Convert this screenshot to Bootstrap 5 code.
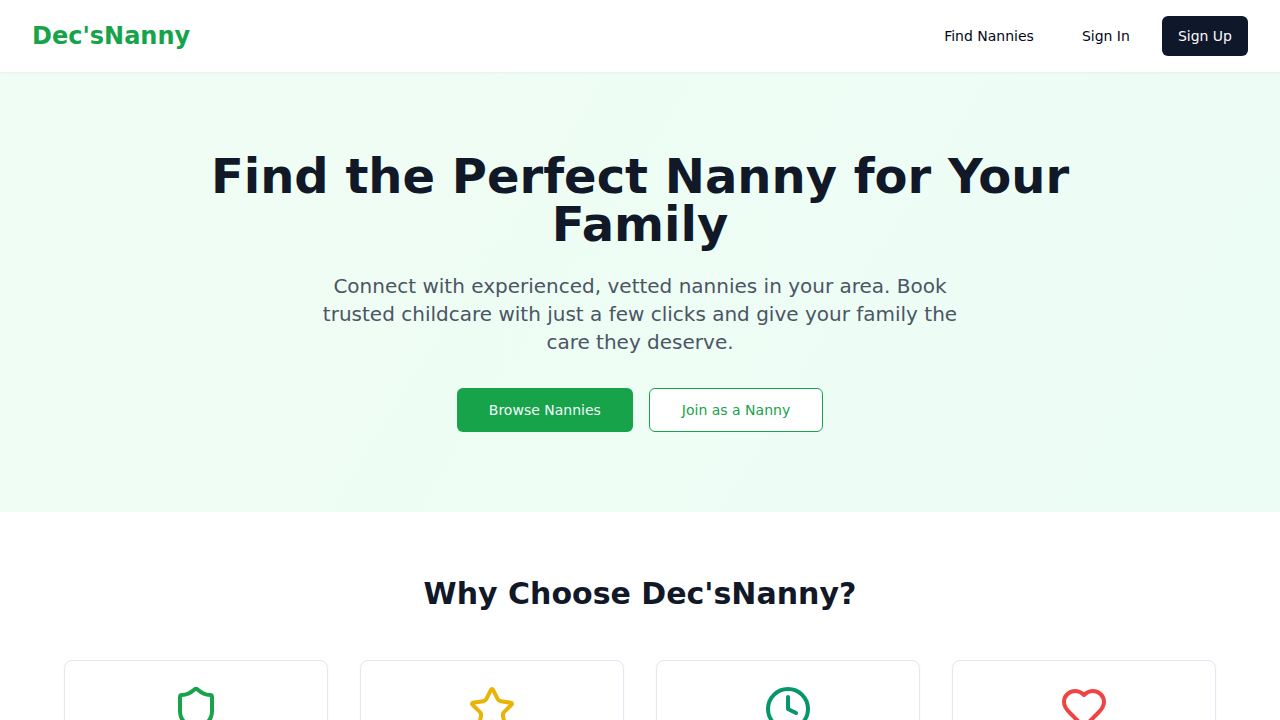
<!DOCTYPE html>
<html lang="en">
<head>
<meta charset="utf-8">
<meta name="viewport" content="width=device-width, initial-scale=1">
<title>Dec'sNanny</title>
<link href="https://cdn.jsdelivr.net/npm/bootstrap@5.3.0/dist/css/bootstrap.min.css" rel="stylesheet">
<style>
  body { font-family: "DejaVu Sans", sans-serif; color: #020817; font-size: 16px; line-height: 24px; overflow-x: hidden; }
  html { scrollbar-width: none; }
  .site-nav { box-shadow: 0 1px 2px rgba(0,0,0,.05); position: relative; z-index: 1; padding: 16px 32px; }
  .brand-name { font-size: 24px; line-height: 32px; font-weight: 700; color: #16a34a; }
  .btn { --bs-btn-font-size: 14px; --bs-btn-line-height: 20px; --bs-btn-border-radius: 6px; --bs-btn-padding-x: 16px; --bs-btn-padding-y: 10px; border-width: 0; }
  .btn-plain { --bs-btn-color: #020817; --bs-btn-hover-bg: #f1f5f9; }
  .btn-dark-navy { --bs-btn-color: #f8fafc; --bs-btn-bg: #0f172a; --bs-btn-hover-color: #f8fafc; --bs-btn-hover-bg: #272e3f; }
  .btn-cta { --bs-btn-padding-x: 32px; --bs-btn-padding-y: 12px; }
  .btn-leaf { --bs-btn-color: #f8fafc; --bs-btn-bg: #16a34a; --bs-btn-hover-color: #f8fafc; --bs-btn-hover-bg: #15803d; }
  .btn-outline-leaf { --bs-btn-padding-y: 11px; --bs-btn-color: #16a34a; --bs-btn-bg: #fff; --bs-btn-border-color: #16a34a; --bs-btn-hover-color: #16a34a; --bs-btn-hover-bg: #f0fdf4; --bs-btn-hover-border-color: #16a34a; border-width: 1px; }
  .hero { background: linear-gradient(122deg, #f0fdf4, #ecfdf5); padding: 80px 32px; }
  .hero-inner { max-width: 896px; }
  .hero h1 { font-size: 48px; line-height: 48px; font-weight: 700; color: #111827; margin-bottom: 24px; }
  .hero p { font-size: 20px; line-height: 28px; color: #4b5563; max-width: 672px; margin-bottom: 32px; }
  .features { padding: 64px 64px; }
  .features h2 { font-size: 30px; line-height: 36px; font-weight: 700; color: #111827; margin-bottom: 48px; }
  .features .card { border-color: #e2e8f0; border-radius: 8px; box-shadow: 0 1px 2px rgba(0,0,0,.05); padding: 24px; }
  .features .row { --bs-gutter-x: 32px; --bs-gutter-y: 32px; }
  .features svg { width: 48px; height: 48px; fill: none; stroke: currentColor; stroke-width: 2; stroke-linecap: round; stroke-linejoin: round; }
  .tone-green { color: #16a34a; } .tone-yellow { color: #eab308; } .tone-emerald { color: #059669; } .tone-red { color: #ef4444; }
</style>
</head>
<body>
<nav class="site-nav bg-white d-flex flex-wrap justify-content-between align-items-center" aria-label="Main">
  <a href="#" class="brand-name text-decoration-none">Dec'sNanny</a>
  <div class="d-flex gap-3">
    <a href="#" class="btn btn-plain">Find Nannies</a>
    <a href="#" class="btn btn-plain">Sign In</a>
    <a href="#" class="btn btn-dark-navy">Sign Up</a>
  </div>
</nav>
<main>
  <section class="hero text-center">
    <div class="hero-inner mx-auto">
      <h1>Find the Perfect Nanny for Your Family</h1>
      <p class="mx-auto">Connect with experienced, vetted nannies in your area. Book trusted childcare with just a few clicks and give your family the care they deserve.</p>
      <div class="d-flex flex-wrap justify-content-center gap-3">
        <button type="button" class="btn btn-cta btn-leaf">Browse Nannies</button>
        <button type="button" class="btn btn-cta btn-outline-leaf">Join as a Nanny</button>
      </div>
    </div>
  </section>
  <section class="features bg-white">
    <h2 class="text-center">Why Choose Dec'sNanny?</h2>
    <div class="row row-cols-1 row-cols-md-2 row-cols-lg-4">
      <div class="col"><div class="card h-100 align-items-center tone-green"><svg viewBox="0 0 24 24" aria-hidden="true"><path d="M20 13c0 5-3.500 7.500-7.660 8.950a1 1 0 0 1-.67-.01C7.500 20.500 4 18 4 13V6a1 1 0 0 1 1-1c2 0 4.500-1.200 6.240-2.720a1.170 1.170 0 0 1 1.520 0C14.510 3.810 17 5 19 5a1 1 0 0 1 1 1z"/></svg></div></div>
      <div class="col"><div class="card h-100 align-items-center tone-yellow"><svg viewBox="0 0 24 24" aria-hidden="true"><path d="M11.525 2.295a.53.53 0 0 1 .95 0l2.310 4.679a2.123 2.123 0 0 0 1.595 1.160l5.166.756a.53.53 0 0 1 .294.904l-3.736 3.638a2.123 2.123 0 0 0-.611 1.878l.882 5.140a.53.53 0 0 1-.771.560l-4.618-2.428a2.122 2.122 0 0 0-1.973 0L6.396 21.010a.53.53 0 0 1-.770-.560l.881-5.139a2.122 2.122 0 0 0-.611-1.879L2.160 9.795a.53.53 0 0 1 .294-.906l5.165-.755a2.122 2.122 0 0 0 1.597-1.160z"/></svg></div></div>
      <div class="col"><div class="card h-100 align-items-center tone-emerald"><svg viewBox="0 0 24 24" aria-hidden="true"><circle cx="12" cy="12" r="10"/><path d="M12 6v6l4 2"/></svg></div></div>
      <div class="col"><div class="card h-100 align-items-center tone-red"><svg viewBox="0 0 24 24" aria-hidden="true"><path d="M19 14c1.490-1.460 3-3.210 3-5.500A5.500 5.500 0 0 0 16.500 3c-1.760 0-3 .5-4.500 2-1.500-1.500-2.740-2-4.500-2A5.500 5.500 0 0 0 2 8.500c0 2.300 1.500 4.050 3 5.500l7 7Z"/></svg></div></div>
    </div>
  </section>
</main>
<script src="https://cdn.jsdelivr.net/npm/bootstrap@5.3.0/dist/js/bootstrap.bundle.min.js"></script>
</body>
</html>
